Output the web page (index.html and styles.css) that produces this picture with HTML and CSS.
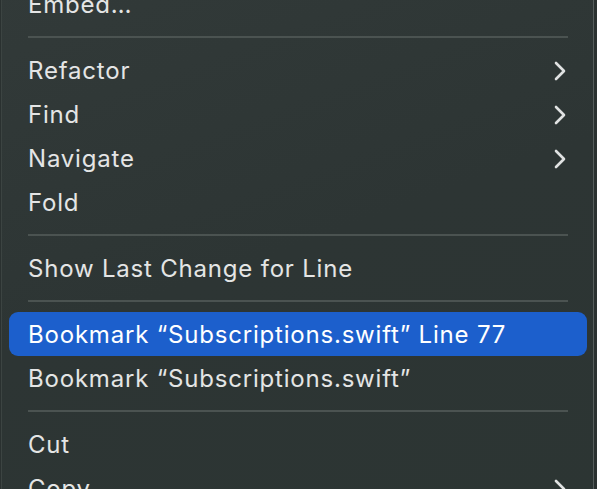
FILE: index.html
```html
<!DOCTYPE html>
<html>
<head>
<meta charset="utf-8">
<link rel="stylesheet" href="styles.css">
</head>
<body>
<div class="menu">
  <div class="item"><span>Embed…</span></div>
  <div class="sep"></div>
  <div class="item"><span>Refactor</span><svg class="chev" viewBox="0 0 12 20"><path d="M2 2 L10 10 L2 18"/></svg></div>
  <div class="item"><span>Find</span><svg class="chev" viewBox="0 0 12 20"><path d="M2 2 L10 10 L2 18"/></svg></div>
  <div class="item"><span>Navigate</span><svg class="chev" viewBox="0 0 12 20"><path d="M2 2 L10 10 L2 18"/></svg></div>
  <div class="item"><span>Fold</span></div>
  <div class="sep"></div>
  <div class="item"><span>Show Last Change for Line</span></div>
  <div class="sep"></div>
  <div class="item active"><span>Bookmark “Subscriptions.swift” Line 77</span></div>
  <div class="item"><span>Bookmark “Subscriptions.swift”</span></div>
  <div class="sep"></div>
  <div class="item"><span>Cut</span></div>
  <div class="item"><span>Copy</span><svg class="chev" viewBox="0 0 12 20"><path d="M2 2 L10 10 L2 18"/></svg></div>
</div>
</body>
</html>
```
FILE: styles.css
```css
html, body {
  margin: 0;
  padding: 0;
  background: #2a3130;
  overflow: hidden;
}
body {
  width: 597px;
  height: 489px;
}
.menu {
  width: 593px;
  margin-top: -18px;
  margin-left: 1px;
  background: linear-gradient(160deg, #323a39 0%, #2d3534 50%, #2c3533 100%);
  border-left: 1px solid #3c4442;
  border-right: 1px solid #565d5c;
  font-family: Inter, "Noto Sans", sans-serif;
  font-size: 24px;
  color: #e4e5e5;
  box-sizing: border-box;
}
.item {
  height: 44px;
  margin: 0 6px 0 7px;
  padding: 1px 21px 0 19px;
  display: flex;
  align-items: center;
  justify-content: space-between;
  border-radius: 9px;
  letter-spacing: 0.8px;
  box-sizing: border-box;
}
.item.active {
  background: #1c5fcc;
  color: #ffffff;
}
.chev {
  width: 12px;
  height: 20px;
  fill: none;
  stroke: #e0e2e2;
  stroke-width: 2.6;
  stroke-linecap: round;
  stroke-linejoin: round;
}
.sep {
  height: 2px;
  margin: 10px 25px 10px 26px;
  background: #4b5351;
}
```
